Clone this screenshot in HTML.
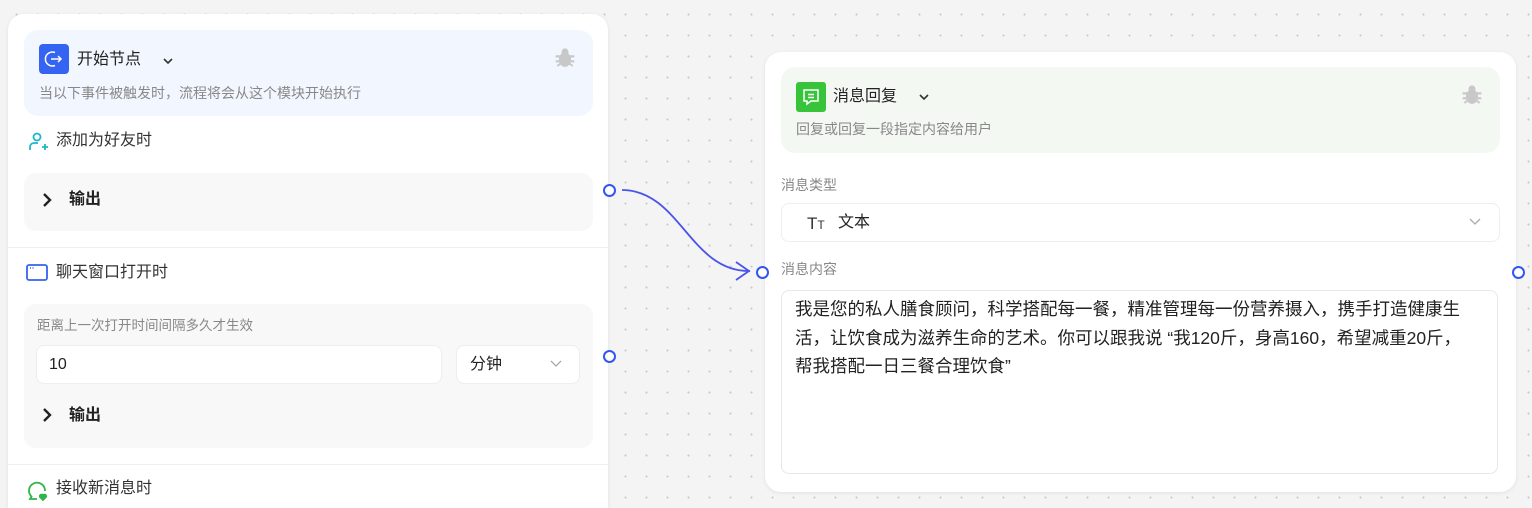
<!DOCTYPE html><html><head><meta charset="utf-8"><style>
*{box-sizing:border-box;margin:0;padding:0}
html,body{width:1532px;height:508px;overflow:hidden}
body{position:relative;font-family:"Liberation Sans","Noto Sans CJK SC",sans-serif;background-color:#f4f4f5;background-image:radial-gradient(#c8c8c8 0.8px,transparent 1.2px);background-size:21px 21px;background-position:6px 4px;color:#222}
.a{position:absolute}
.card{position:absolute;background:#fff;border-radius:16px;box-shadow:0 1px 4px rgba(0,0,0,.08)}
.t{position:absolute;white-space:nowrap;line-height:1}
.hd{position:absolute;border-radius:14px}
.h{position:absolute;width:13px;height:13px;border:2.5px solid #3355f0;border-radius:50%;background:#fff}
.out{position:absolute;font-weight:bold;font-size:16px;line-height:1}
</style></head><body>
<div class="card" style="left:8px;top:14px;width:600px;height:510px">
 <div class="hd" style="left:16px;top:16px;width:569px;height:86px;background:#f2f6ff"></div>
 <div class="a" style="left:31px;top:30px;width:30px;height:30px;background:#3563f2;border-radius:4px"><svg width="30" height="30" viewBox="0 0 30 30" fill="none" stroke="#fff" stroke-width="1.5"><path d="M16 8.5a7 7 0 1 0 0 13"/><path d="M12 15h10M19 12l3 3-3 3"/></svg></div>
 <div class="t" style="left:69px;top:38px;font-size:16px">开始节点</div>
 <svg class="a" style="left:153px;top:40px" width="14" height="14" viewBox="0 0 14 14" fill="none" stroke="#333" stroke-width="1.6"><path d="M3 5l4 4 4-4"/></svg>
 <svg class="a" style="left:546px;top:33px" width="22" height="22" viewBox="0 0 20 20" fill="#c8c8c8"><ellipse cx="10" cy="11.5" rx="5.5" ry="6.5"/><circle cx="10" cy="4.5" r="3.2"/><path d="M1.5 7.5h17v2h-17zM1.5 12h17v2h-17zM2.5 16.5l3.5-2.5 1 1.5-3.5 2.5zM17.5 16.5l-3.5-2.5-1 1.5 3.5 2.5z"/></svg>
 <div class="t" style="left:31px;top:72px;font-size:14px;color:#888">当以下事件被触发时，流程将会从这个模块开始执行</div>
 <svg class="a" style="left:18px;top:116px" width="24" height="24" viewBox="0 0 24 24" fill="none" stroke="#1fb5cf" stroke-width="1.8"><circle cx="11" cy="7" r="3.5"/><path d="M4 20v-3a4 4 0 0 1 4-4h4M16 17h6M19 14v6"/></svg>
 <div class="t" style="left:48px;top:119px;font-size:16px;color:#333">添加为好友时</div>
 <div class="a" style="left:16px;top:159px;width:569px;height:58px;background:#f8f8f8;border-radius:12px"></div>
 <svg class="a" style="left:32px;top:177px" width="14" height="18" viewBox="0 0 14 18" fill="none" stroke="#222" stroke-width="2.4"><path d="M4 3l6 6-6 6"/></svg>
 <div class="out" style="left:61px;top:178px">输出</div>
 <div class="a" style="left:0;top:233px;width:600px;height:1px;background:#eee"></div>
 <svg class="a" style="left:18px;top:249px" width="22" height="20" viewBox="0 0 22 20" fill="none" stroke="#3563f2" stroke-width="1.8"><rect x="1" y="2" width="20" height="15" rx="2"/><path d="M4 5h1M6.5 5h1" stroke-width="1.4"/></svg>
 <div class="t" style="left:48px;top:251px;font-size:16px;color:#333">聊天窗口打开时</div>
 <div class="a" style="left:16px;top:290px;width:569px;height:144px;background:#f8f8f8;border-radius:12px"></div>
 <div class="t" style="left:29px;top:305px;font-size:13.5px;color:#888">距离上一次打开时间间隔多久才生效</div>
 <div class="a" style="left:28px;top:331px;width:406px;height:39px;background:#fff;border:1px solid #eee;border-radius:8px"></div>
 <div class="t" style="left:41px;top:343px;font-size:16px">10</div>
 <div class="a" style="left:448px;top:331px;width:124px;height:39px;background:#fff;border:1px solid #eee;border-radius:8px"></div>
 <div class="t" style="left:462px;top:343px;font-size:16px">分钟</div>
 <svg class="a" style="left:541px;top:344px" width="14" height="12" viewBox="0 0 14 12" fill="none" stroke="#aaa" stroke-width="1.3"><path d="M2 3l5 5 5-5"/></svg>
 <svg class="a" style="left:32px;top:392px" width="14" height="18" viewBox="0 0 14 18" fill="none" stroke="#222" stroke-width="2.4"><path d="M4 3l6 6-6 6"/></svg>
 <div class="out" style="left:61px;top:394px">输出</div>
 <div class="a" style="left:0;top:450px;width:600px;height:1px;background:#eee"></div>
 <svg class="a" style="left:18px;top:465px" width="24" height="24" viewBox="0 0 24 24" fill="none" stroke="#2fb548" stroke-width="1.8"><path d="M11 20H4l1.5-2.5A8 8 0 1 1 19 12"/><path d="M17 21l-3-3a1.5 1.5 0 0 1 3-1.5 1.5 1.5 0 0 1 3 1.5z" fill="#2fb548"/></svg>
 <div class="t" style="left:48px;top:467px;font-size:16px;color:#333">接收新消息时</div>
</div>
<div class="h" style="left:603px;top:184px"></div>
<div class="h" style="left:603px;top:350px"></div>
<svg class="a" style="left:0;top:0" width="1532" height="508" fill="none" stroke="#4a55e8" stroke-width="1.8"><path d="M622 190C680 190 690 272 750 271"/><path d="M736 262l13 9-13 9"/></svg>
<div class="card" style="left:765px;top:52px;width:751px;height:440px">
 <div class="hd" style="left:16px;top:15px;width:719px;height:86px;background:#f3f8f3"></div>
 <div class="a" style="left:31px;top:30px;width:30px;height:30px;background:#37c43a;border-radius:3px"><svg width="30" height="30" viewBox="0 0 30 30" fill="none" stroke="#fff" stroke-width="1.5"><path d="M8 8h14v11h-7l-4 3v-3H8z"/><path d="M12 12.5h6M12 15.5h6"/></svg></div>
 <div class="t" style="left:68px;top:37px;font-size:16px">消息回复</div>
 <svg class="a" style="left:152px;top:38px" width="14" height="14" viewBox="0 0 14 14" fill="none" stroke="#333" stroke-width="1.6"><path d="M3 5l4 4 4-4"/></svg>
 <svg class="a" style="left:696px;top:32px" width="22" height="22" viewBox="0 0 20 20" fill="#c8c8c8"><ellipse cx="10" cy="11.5" rx="5.5" ry="6.5"/><circle cx="10" cy="4.5" r="3.2"/><path d="M1.5 7.5h17v2h-17zM1.5 12h17v2h-17zM2.5 16.5l3.5-2.5 1 1.5-3.5 2.5zM17.5 16.5l-3.5-2.5-1 1.5 3.5 2.5z"/></svg>
 <div class="t" style="left:31px;top:70px;font-size:14px;color:#888">回复或回复一段指定内容给用户</div>
 <div class="t" style="left:16px;top:126px;font-size:14px;color:#888">消息类型</div>
 <div class="a" style="left:16px;top:151px;width:719px;height:39px;border:1px solid #eee;border-radius:8px"></div>
 <div class="t" style="left:42px;top:163px;font-size:17px;color:#333">T<span style="font-size:12px">T</span></div>
 <div class="t" style="left:73px;top:163px;font-size:16px">文本</div>
 <svg class="a" style="left:703px;top:164px" width="14" height="12" viewBox="0 0 14 12" fill="none" stroke="#aaa" stroke-width="1.3"><path d="M2 3l5 5 5-5"/></svg>
 <div class="t" style="left:16px;top:210px;font-size:14px;color:#888">消息内容</div>
 <div class="a" style="left:16px;top:238px;width:717px;height:184px;border:1px solid #e8e8e8;border-radius:8px"></div>
 <div class="a" style="left:30px;top:243px;width:672px;font-size:17.5px;line-height:28.5px;color:#222">我是您的私人膳食顾问，科学搭配每一餐，精准管理每一份营养摄入，携手打造健康生活，让饮食成为滋养生命的艺术。你可以跟我说 “我120斤，身高160，希望减重20斤，帮我搭配一日三餐合理饮食”</div>
</div>
<div class="h" style="left:756px;top:266px"></div>
<div class="h" style="left:1512px;top:266px"></div>
</body></html>
